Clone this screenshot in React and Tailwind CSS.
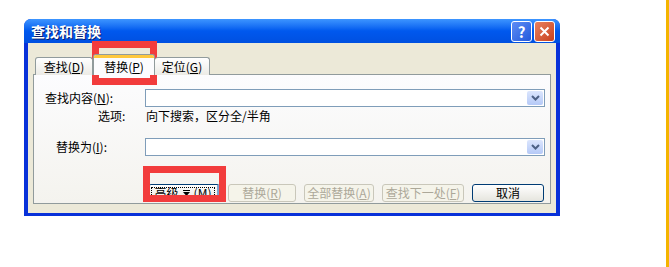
import React from 'react';

const FONT = { fontFamily: '"Noto Sans CJK SC", "Noto Sans", sans-serif' };

const Combo = () => (
  <div className="flex h-[18px] w-[400px] border border-[#7F9DB9] bg-white">
    <div className="flex-1" />
    <div className="m-[1px] flex w-[16px] items-center justify-center rounded-[2px] bg-gradient-to-b from-[#DCE6FD] to-[#B5C9F7]">
      <svg width="9" height="6" viewBox="0 0 9 6">
        <path d="M1 1 L4.5 4.5 L8 1" stroke="#4D6185" strokeWidth="2" fill="none" />
      </svg>
    </div>
  </div>
);

const Btn = ({ children, w, disabled, focus }) => (
  <div
    className={`flex h-[18px] shrink-0 items-center justify-center whitespace-nowrap rounded-[3px] border text-[12px] leading-none ${
      disabled
        ? 'border-[#C9C7BA] bg-[#F5F4EA] text-[#ACA899]'
        : 'border-[#003C74] bg-gradient-to-b from-[#FFFFFF] to-[#E6E5DE] text-black'
    } ${w}`}
  >
    {focus ? (
      <div className="flex h-full w-full items-center justify-center border-r-2 border-[#7DA2CE]">
        <div className="flex h-[12px] w-[calc(100%-4px)] items-center justify-center whitespace-nowrap border border-dotted border-black">
          {children}
        </div>
      </div>
    ) : (
      children
    )}
  </div>
);

const App = () => {
  return (
    <div className="relative flex h-[267px] w-[669px] bg-white" style={FONT}>
      {/* dialog window */}
      <div className="ml-[24px] mt-[19px] flex h-[197px] w-[536px] flex-col overflow-hidden rounded-t-[7px] bg-[#0831D9]">
        {/* title bar */}
        <div className="flex h-[24px] items-center bg-gradient-to-b from-[#3D95FF] via-[#0058EE] to-[#0050E0] pl-[7px] pr-[5px]">
          <span className="text-[14px] font-bold text-white [text-shadow:1px_1px_0_#0A1E6E]">查找和替换</span>
          <div className="ml-auto flex gap-[2px]">
            <div className="flex h-[21px] w-[21px] items-center justify-center rounded-[3px] border border-white bg-gradient-to-br from-[#5E8DF5] to-[#2358DB] text-[15px] font-bold leading-none text-white">
              ?
            </div>
            <div className="flex h-[21px] w-[21px] items-center justify-center rounded-[3px] border border-white bg-gradient-to-br from-[#E8805E] to-[#C8401C]">
              <svg width="11" height="11" viewBox="0 0 11 11">
                <path d="M1.5 1.5 L9.5 9.5 M9.5 1.5 L1.5 9.5" stroke="white" strokeWidth="2" />
              </svg>
            </div>
          </div>
        </div>
        {/* body */}
        <div className="mx-[4px] mb-[3px] flex flex-1 flex-col bg-[#ECE9D8] px-[5px] pt-[11px] pb-[9px]">
          {/* tabs */}
          <div className="relative z-10 -mb-px flex h-[21px] items-end pl-[2px] text-[12px] leading-none">
            <div className="flex h-[18px] w-[58px] items-center justify-center rounded-t-[3px] border border-b-0 border-[#919B9C] bg-gradient-to-b from-white to-[#ECEBE6]">
              查找(<u>D</u>)
            </div>
            <div className="flex h-[21px] w-[62px] flex-col rounded-t-[3px] border border-b-0 border-[#919B9C] bg-[#FCFCFE]">
              <div className="h-[3px] rounded-t-[2px] bg-[#FFC83C]" />
              <div className="flex flex-1 items-center justify-center">替换(<u>P</u>)</div>
            </div>
            <div className="flex h-[18px] w-[55px] items-center justify-center rounded-t-[3px] border border-b-0 border-l-0 border-[#919B9C] bg-gradient-to-b from-white to-[#ECEBE6]">
              定位(<u>G</u>)
            </div>
          </div>
          {/* panel */}
          <div className="flex flex-1 flex-col border border-[#919B9C] bg-gradient-to-b from-[#FCFCFE] to-[#F4F3EE] pt-[14px] text-[12px] leading-none">
            <div className="flex items-center">
              <span className="w-[111px] pl-[11px]">查找内容(<u>N</u>):</span>
              <Combo />
            </div>
            <div className="mt-[3px] flex items-center">
              <span className="w-[111px] pl-[64px]">选项:</span>
              <span className="pl-[1px]">向下搜索，区分全/半角</span>
            </div>
            <div className="mt-[16px] flex items-center">
              <span className="w-[111px] pl-[22px]">替换为(<u>I</u>):</span>
              <Combo />
            </div>
            <div className="mt-[28px] flex items-center gap-[8px] pl-[114px]">
              <Btn w="w-[72px]" focus>
                <span className="flex items-center gap-[4px] whitespace-nowrap">
                  <span>高级</span>
                  <svg width="7" height="7" viewBox="0 0 7 7" className="shrink-0">
                    <rect x="0" y="0" width="7" height="1" fill="black" />
                    <path d="M0 2 L7 2 L3.5 6 Z" fill="black" />
                  </svg>
                  <span>(<u>M</u>)</span>
                </span>
              </Btn>
              <Btn w="w-[68px]" disabled>替换(<u>R</u>)</Btn>
              <Btn w="w-[70px]" disabled>全部替换(<u>A</u>)</Btn>
              <Btn w="w-[82px]" disabled>查找下一处(<u>F</u>)</Btn>
              <Btn w="w-[72px]">取消</Btn>
            </div>
          </div>
        </div>
      </div>
      {/* yellow edge line */}
      <div className="ml-auto w-[3px] bg-[#F4B400]" />
      {/* red highlight boxes */}
      <div className="absolute left-[92px] top-[41px] h-[44px] w-[65px] border-[7px] border-[#F23C3C]" />
      <div className="absolute left-[143px] top-[166px] h-[36px] w-[83px] border-[7px] border-[#F23C3C]" />
    </div>
  );
};

export default App;
